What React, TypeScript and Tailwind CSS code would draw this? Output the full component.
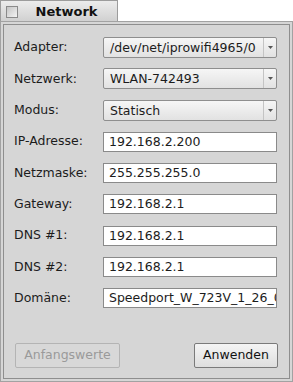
import React from 'react';

const font = { fontFamily: '"DejaVu Sans", Verdana, sans-serif' };

type Field = { label: string; value: string; combo?: boolean };

const fields: Field[] = [
  { label: 'Adapter:', value: '/dev/net/iprowifi4965/0', combo: true },
  { label: 'Netzwerk:', value: 'WLAN-742493', combo: true },
  { label: 'Modus:', value: 'Statisch', combo: true },
  { label: 'IP-Adresse:', value: '192.168.2.200' },
  { label: 'Netzmaske:', value: '255.255.255.0' },
  { label: 'Gateway:', value: '192.168.2.1' },
  { label: 'DNS #1:', value: '192.168.2.1' },
  { label: 'DNS #2:', value: '192.168.2.1' },
  { label: 'Domäne:', value: 'Speedport_W_723V_1_26_000' },
];

const Combo = ({ value }: { value: string }) => (
  <div className="flex h-[21px] w-[174px] rounded-[2px] border border-[#8e8e8e] bg-gradient-to-b from-[#f6f6f6] to-[#e2e2e2]">
    <div className="flex-1 overflow-hidden whitespace-nowrap pl-[6px] leading-[19px]">{value}</div>
    <div className="flex w-[13px] items-center justify-center border-l border-[#c4c4c4]">
      <svg width="5" height="3" viewBox="0 0 5 3">
        <path d="M0 0h5L2.5 3z" fill="#555" />
      </svg>
    </div>
  </div>
);

const TextInput = ({ value }: { value: string }) => (
  <div className="h-[20px] w-[174px] overflow-hidden whitespace-nowrap border border-[#8a8a8a] bg-white pl-[5px] leading-[18px]">
    {value}
  </div>
);

export default function App() {
  return (
    <div className="flex h-[382px] w-[293px] flex-col bg-white text-[12.5px] text-[#1c1c1c]" style={font}>
      {/* tab */}
      <div className="flex h-[22px] w-[118px] items-center border-l border-r border-t border-[#9c9c9c] bg-gradient-to-b from-[#ececec] to-[#cfcfcf]">
        <div className="ml-[5px] h-[12px] w-[12px] border border-[#8a8a8a] bg-gradient-to-br from-[#c4c4c4] to-[#f4f4f4]" />
        <div className="flex-1 pr-[2px] text-center text-[13px] font-bold text-[#111]">Network</div>
      </div>

      {/* panel */}
      <div className="-mt-px flex flex-1 flex-col border border-[#a2a2a2] bg-[#d6d6d6] p-[2px]">
        <div className="flex flex-1 flex-col border border-[#8e8e8e] pb-[10px] pl-[10px] pr-[11px] pt-[7px]">
          {fields.map((f) => (
            <div key={f.label} className="flex h-[31.33px] items-center">
              <div className="w-[89px]">{f.label}</div>
              {f.combo ? <Combo value={f.value} /> : <TextInput value={f.value} />}
            </div>
          ))}

          <div className="mt-auto flex justify-between pl-px">
            <button className="h-[25px] w-[105px] rounded-[2px] border border-[#b4b4b4] bg-[#d8d8d8] text-[#9a9a9a]">
              Anfangswerte
            </button>
            <button className="h-[25px] w-[84px] rounded-[2px] border border-[#7a7a7a] bg-gradient-to-b from-[#f4f4f4] to-[#dedede] text-[#111]">
              Anwenden
            </button>
          </div>
        </div>
      </div>
    </div>
  );
}
